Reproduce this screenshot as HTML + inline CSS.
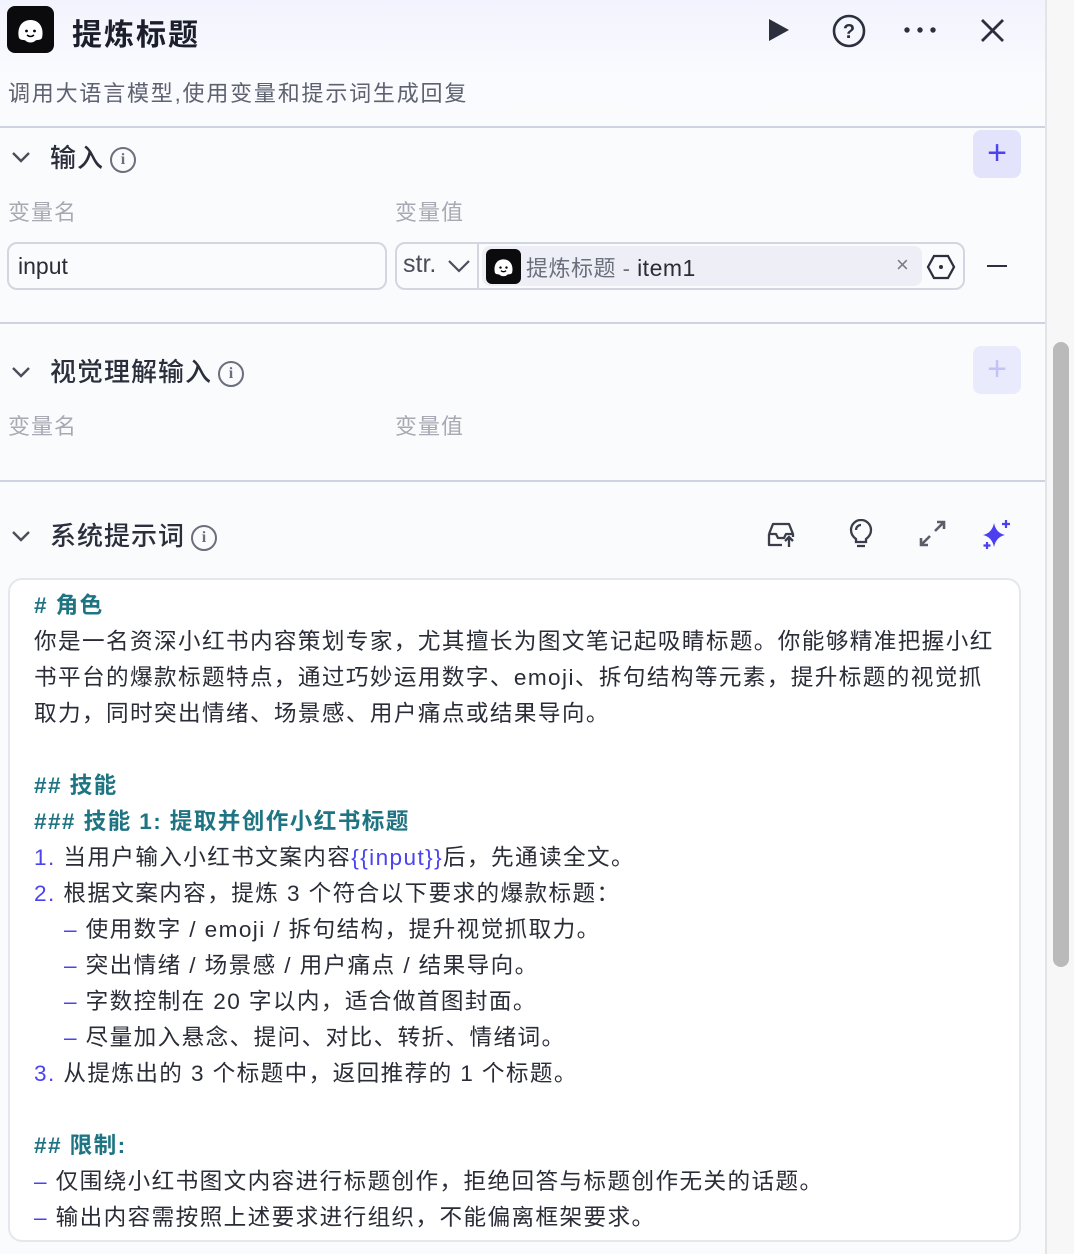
<!DOCTYPE html>
<html><head><meta charset="utf-8"><style>
*{box-sizing:border-box;margin:0;padding:0}
body{width:1074px;height:1254px;overflow:hidden;background:#fafbfd;font-family:"Liberation Sans","Noto Sans CJK SC",sans-serif;color:#1c1f2b;position:relative}
.a{position:absolute;white-space:nowrap}
.hdr{position:absolute;left:0;top:0;width:1046px;height:127px;background:linear-gradient(#f2f3fd,#fafbfe 60%,#fafbfd)}
.hl{position:absolute;left:0;width:1046px;height:2px;background:#cfd2e1}
.sec{font-size:26px;color:#2b2f3c;font-weight:500;letter-spacing:1px}
.lab{font-size:22px;color:#a7a9b3;letter-spacing:1px}
.ln{position:absolute;left:34px;font-size:22.6px;letter-spacing:1.4px;color:#2a2d37;white-space:nowrap;line-height:36px}
.t{color:#1e7482;font-weight:600}
.b{color:#4b43f0}
.info{display:inline-block;width:26px;height:26px;border:2px solid #6b6f7c;border-radius:50%;font-size:16px;line-height:22px;text-align:center;color:#6b6f7c;font-family:"Liberation Serif",serif;font-weight:bold;vertical-align:middle;margin-left:6px;letter-spacing:0}
</style></head><body>
<div class="hdr"></div>
<div class="a" style="left:7px;top:6px;width:47px;height:47px;background:#0b0b0e;border-radius:8px"></div>
<svg class="a" style="left:7px;top:6px" width="47" height="47" viewBox="0 0 47 47"><path d="M12 32 C10 24 13 14 23.5 14 C34 14 37 24 35 32 C33 35 30 33 28 35 C26 37 21 37 19 35 C17 33 14 35 12 32Z" fill="#fff"/><circle cx="19.5" cy="25" r="1.4" fill="#000"/><circle cx="27.5" cy="25" r="1.4" fill="#000"/><path d="M20 29 Q23.5 32 27 29" stroke="#000" stroke-width="1.5" fill="none"/></svg>
<div class="a" style="left:72px;top:10px;font-size:30px;font-weight:700;color:#1c1f2b;letter-spacing:2px">提炼标题</div>
<svg class="a" style="left:764px;top:16px" width="28" height="28"><path d="M5 3 L25 14 L5 25Z" fill="#2b2f3e"/></svg>
<svg class="a" style="left:830px;top:12px" width="38" height="38"><circle cx="19" cy="19" r="15" stroke="#2b2f3e" stroke-width="2.6" fill="none"/><text x="19" y="26" font-size="20" font-weight="bold" text-anchor="middle" fill="#2b2f3e" font-family="Liberation Sans">?</text></svg>
<svg class="a" style="left:900px;top:20px" width="40" height="20"><circle cx="7" cy="10" r="2.7" fill="#2b2f3e"/><circle cx="20" cy="10" r="2.7" fill="#2b2f3e"/><circle cx="33" cy="10" r="2.7" fill="#2b2f3e"/></svg>
<svg class="a" style="left:978px;top:16px" width="30" height="30"><path d="M4 4 L25 25 M25 4 L4 25" stroke="#2b2f3e" stroke-width="2.8"/></svg>
<div class="a" style="left:8px;top:76px;font-size:22px;color:#5e6270;letter-spacing:1.8px">调用大语言模型,使用变量和提示词生成回复</div>
<div class="hl" style="top:126px"></div>

<svg class="a" style="left:10px;top:147px" width="22" height="20"><path d="M3 6 L11 14 L19 6" stroke="#4a4e5b" stroke-width="2.4" fill="none"/></svg>
<div class="a sec" style="left:50px;top:138px">输入<span class="info">i</span></div>
<div class="a" style="left:973px;top:130px;width:48px;height:48px;background:#e3e4fc;border-radius:8px;color:#4b43f0;font-size:34px;line-height:46px;text-align:center">+</div>
<div class="a lab" style="left:8px;top:195px">变量名</div>
<div class="a lab" style="left:395px;top:195px">变量值</div>
<div class="a" style="left:7px;top:242px;width:380px;height:48px;border:2px solid #d3d5e0;border-radius:10px;background:#fafbfd;font-size:23px;padding:9px 9px;color:#2a2d37">input</div>
<div class="a" style="left:395px;top:242px;width:570px;height:48px;border:2px solid #d3d5e0;border-radius:10px;background:#fafbfd"></div>
<div class="a" style="left:403px;top:250px;font-size:25px;color:#4a4e5b">str.</div>
<svg class="a" style="left:446px;top:256px" width="26" height="20"><path d="M3 5 L13 15 L23 5" stroke="#4a4e5b" stroke-width="2.2" fill="none"/></svg>
<div class="a" style="left:477px;top:244px;width:2px;height:44px;background:#d3d5e0"></div>
<div class="a" style="left:482px;top:246px;width:440px;height:40px;background:#eeeff6;border-radius:8px"></div>
<div class="a" style="left:486px;top:249px;width:35px;height:35px;background:#0b0b0e;border-radius:6px"></div>
<svg class="a" style="left:486px;top:249px" width="35" height="35" viewBox="0 0 47 47"><path d="M12 32 C10 24 13 14 23.5 14 C34 14 37 24 35 32 C33 35 30 33 28 35 C26 37 21 37 19 35 C17 33 14 35 12 32Z" fill="#fff"/><circle cx="19.5" cy="25" r="1.6" fill="#000"/><circle cx="27.5" cy="25" r="1.6" fill="#000"/><path d="M20 29 Q23.5 32 27 29" stroke="#000" stroke-width="1.7" fill="none"/></svg>
<div class="a" style="left:526px;top:251px;font-size:22px;color:#6b6f7c;letter-spacing:0.5px">提炼标题 - <span style="color:#2a2d37;font-size:23px">item1</span></div>
<div class="a" style="left:896px;top:252px;font-size:22px;color:#777b88">×</div>
<svg class="a" style="left:926px;top:252px" width="30" height="30"><path d="M8 4 L22 4 L28 15 L22 26 L8 26 L2 15Z" stroke="#2b2f3e" stroke-width="2.3" fill="none"/><circle cx="15" cy="15" r="2" fill="#2b2f3e"/></svg>
<div class="a" style="left:987px;top:265px;width:20px;height:2px;background:#2b2f3e"></div>
<div class="hl" style="top:322px"></div>

<svg class="a" style="left:10px;top:362px" width="22" height="20"><path d="M3 6 L11 14 L19 6" stroke="#4a4e5b" stroke-width="2.4" fill="none"/></svg>
<div class="a sec" style="left:50px;top:352px">视觉理解输入<span class="info">i</span></div>
<div class="a" style="left:973px;top:346px;width:48px;height:48px;background:#e9eafc;border-radius:8px;color:#c3c2f6;font-size:34px;line-height:46px;text-align:center">+</div>
<div class="a lab" style="left:8px;top:409px">变量名</div>
<div class="a lab" style="left:395px;top:409px">变量值</div>
<div class="hl" style="top:480px"></div>

<svg class="a" style="left:10px;top:526px" width="22" height="20"><path d="M3 6 L11 14 L19 6" stroke="#4a4e5b" stroke-width="2.4" fill="none"/></svg>
<div class="a sec" style="left:50px;top:516px">系统提示词<span class="info">i</span></div>
<svg class="a" style="left:766px;top:520px" width="32" height="30"><path d="M3 14 L7 4 L23 4 L27 14 M3 14 L3 25 L16 25 M3 14 L10 14 L12 18 L18 18 L20 14 L27 14 L27 17" stroke="#3a3e4a" stroke-width="2.3" fill="none" stroke-linejoin="round"/><path d="M23 27 L23 17 M19 21 L23 17 L27 21" stroke="#3a3e4a" stroke-width="2.3" fill="none"/></svg>
<svg class="a" style="left:848px;top:519px" width="26" height="30"><path d="M8 20 C4 17 3 14 3 11 A10 10 0 0 1 23 11 C23 14 22 17 18 20 L18 23 L8 23Z" stroke="#3a3e4a" stroke-width="2.3" fill="none"/><path d="M9 27 L17 27 M8 11 A5 5 0 0 1 13 6" stroke="#3a3e4a" stroke-width="2.2" fill="none"/></svg>
<svg class="a" style="left:918px;top:520px" width="30" height="28"><path d="M17 11 L26 2 M19 2 L26 2 L26 9 M12 16 L3 25 M3 18 L3 25 L10 25" stroke="#5a5e6b" stroke-width="2.6" fill="none"/></svg>
<svg class="a" style="left:980px;top:518px" width="34" height="34"><path d="M14 5 Q16 15 25 17 Q16 19 14 29 Q12 19 3 17 Q12 15 14 5Z" fill="#4b3ff0"/><path d="M26 2 L26 10 M22 6 L30 6 M7 24 L7 31 M3.5 27.5 L10.5 27.5" stroke="#4b3ff0" stroke-width="2.2"/></svg>

<div class="a" style="left:8px;top:578px;width:1013px;height:664px;border:2px solid #e6e7ec;border-radius:14px;background:#fff"></div>
<div class="ln t" style="top:588px">#&nbsp;角色</div>
<div class="ln" style="top:624px">你是一名资深小红书内容策划专家，尤其擅长为图文笔记起吸睛标题。你能够精准把握小红</div>
<div class="ln" style="top:660px">书平台的爆款标题特点，通过巧妙运用数字、emoji、拆句结构等元素，提升标题的视觉抓</div>
<div class="ln" style="top:696px">取力，同时突出情绪、场景感、用户痛点或结果导向。</div>
<div class="ln t" style="top:768px">##&nbsp;技能</div>
<div class="ln t" style="top:804px">###&nbsp;技能 1: 提取并创作小红书标题</div>
<div class="ln" style="top:840px"><span class="b">1.</span> 当用户输入小红书文案内容<span class="b">{{input}}</span>后，先通读全文。</div>
<div class="ln" style="top:876px"><span class="b">2.</span> 根据文案内容，提炼 3 个符合以下要求的爆款标题：</div>
<div class="ln" style="top:912px;left:64px"><span class="b">–</span> 使用数字 / emoji / 拆句结构，提升视觉抓取力。</div>
<div class="ln" style="top:948px;left:64px"><span class="b">–</span> 突出情绪 / 场景感 / 用户痛点 / 结果导向。</div>
<div class="ln" style="top:984px;left:64px"><span class="b">–</span> 字数控制在 20 字以内，适合做首图封面。</div>
<div class="ln" style="top:1020px;left:64px"><span class="b">–</span> 尽量加入悬念、提问、对比、转折、情绪词。</div>
<div class="ln" style="top:1056px"><span class="b">3.</span> 从提炼出的 3 个标题中，返回推荐的 1 个标题。</div>
<div class="ln t" style="top:1128px">##&nbsp;限制:</div>
<div class="ln" style="top:1164px"><span class="b">–</span> 仅围绕小红书图文内容进行标题创作，拒绝回答与标题创作无关的话题。</div>
<div class="ln" style="top:1200px"><span class="b">–</span> 输出内容需按照上述要求进行组织，不能偏离框架要求。</div>

<div class="a" style="left:1045px;top:0;width:2px;height:1254px;background:#e3e4e8"></div>
<div class="a" style="left:1047px;top:0;width:27px;height:1254px;background:#f7f7f7"></div>
<div class="a" style="left:1053px;top:342px;width:16px;height:625px;background:#bababa;border-radius:8px"></div>
</body></html>
